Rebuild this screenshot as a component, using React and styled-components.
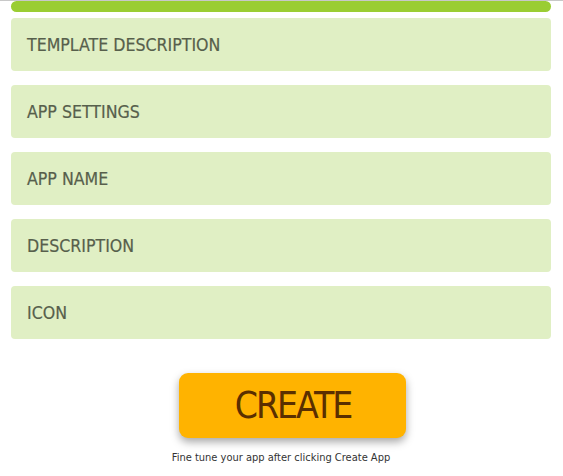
import React from "react";
import styled, { createGlobalStyle } from "styled-components";

const GlobalStyle = createGlobalStyle`
  html, body {
    margin: 0;
    padding: 0;
    background: #ffffff;
  }
  body {
    border-top: 1px solid #c8c8c8;
  }
`;

const Page = styled.div`
  width: 540px;
  margin: 0 auto 0 11px;
  display: flex;
  flex-direction: column;
  font-family: "DejaVu Sans Condensed", "Liberation Sans Narrow", sans-serif;
`;

const ProgressBar = styled.div`
  height: 11px;
  border-radius: 6px;
  background: #9acd32;
`;

const Sections = styled.div`
  display: flex;
  flex-direction: column;
  gap: 14px;
  margin-top: 6px;
`;

const Section = styled.div`
  height: 53px;
  border-radius: 4px;
  background: #e0efc4;
  display: flex;
  align-items: center;
  padding: 1px 16px 0;
  box-sizing: border-box;
  font-size: 17.6px;
  font-weight: 500;
  color: #575f4c;
  -webkit-text-stroke: 0.2px #575f4c;
`;

const Footer = styled.div`
  display: flex;
  flex-direction: column;
  align-items: center;
  margin-top: 34px;
`;

const CreateButton = styled.button`
  width: 227px;
  height: 65px;
  margin-left: 22px;
  border: none;
  border-radius: 9px;
  background: #ffb300;
  color: #5a2f00;
  font-family: inherit;
  font-size: 37px;
  letter-spacing: -2px;
  padding: 0 0 0 2px;
  box-shadow: 0 4px 8px rgba(0, 0, 0, 0.35);
  cursor: pointer;
`;

const Hint = styled.p`
  margin: 13px 0 0;
  font-size: 11px;
  color: #333;
`;

const fields = ["TEMPLATE DESCRIPTION", "APP SETTINGS", "APP NAME", "DESCRIPTION", "ICON"];

export default function App() {
  return (
    <>
      <GlobalStyle />
      <Page>
        <ProgressBar />
        <Sections>
          {fields.map((f) => (
            <Section key={f}>{f}</Section>
          ))}
        </Sections>
        <Footer>
          <CreateButton>CREATE</CreateButton>
          <Hint>Fine tune your app after clicking Create App</Hint>
        </Footer>
      </Page>
    </>
  );
}
